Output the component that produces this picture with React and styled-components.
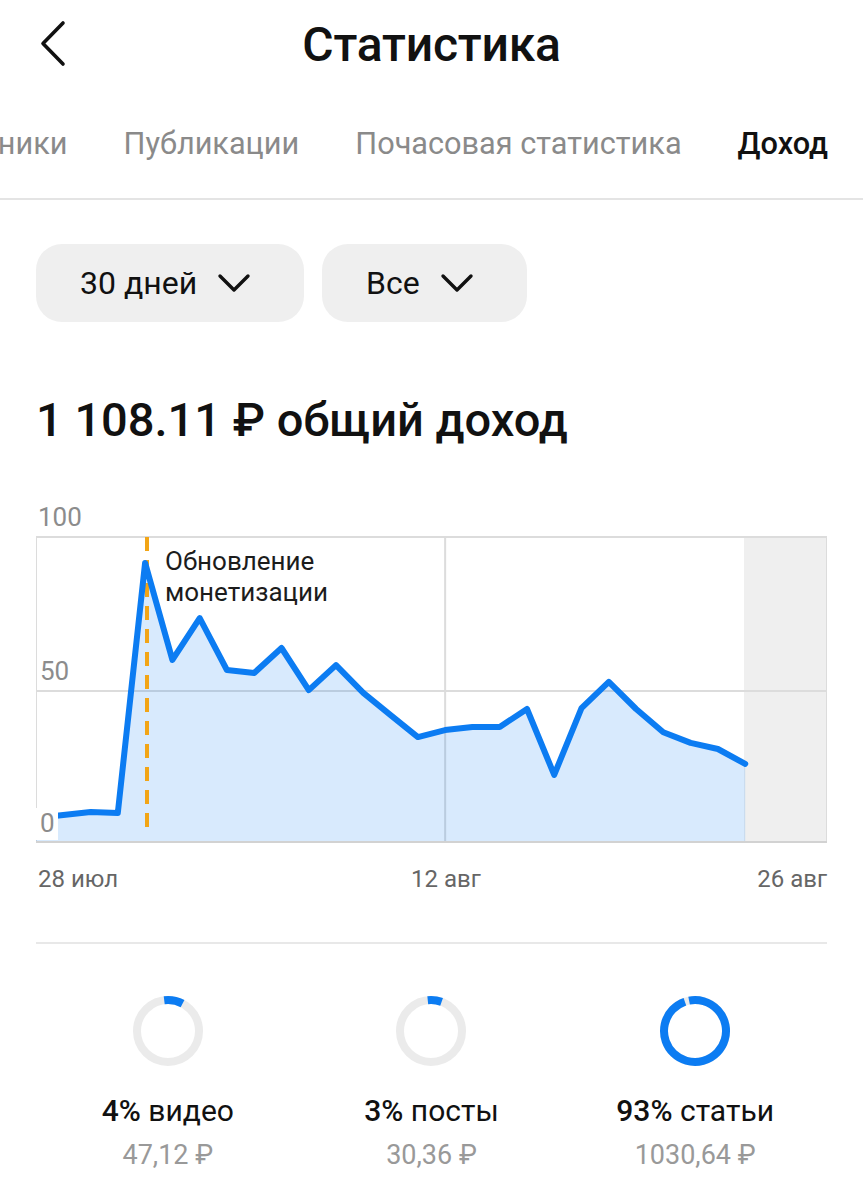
import React from "react";
import styled, { createGlobalStyle } from "styled-components";

const GlobalStyle = createGlobalStyle`
  body {
    margin: 0;
    background: #fff;
    font-family: Roboto, "Noto Sans", sans-serif;
    color: #111;
  }
`;

const TABS = ["Источники", "Публикации", "Почасовая статистика", "Доход"];
const ACTIVE_TAB = "Доход";

// revenue per day, 28 jul .. 23 aug
const REVENUE = [
  7.9, 8.9, 9.8, 9.5, 91.5, 59.7, 73.4, 56.4, 55.4, 63.6, 49.8, 58, 48.9, 41.6,
  34.4, 36.7, 37.7, 37.7, 43.6, 22, 43.9, 52.5, 43.6, 36, 32.5, 30.5, 25.6,
];

const SHARES = [
  { pct: "4%", label: "видео", amount: "47,12 ₽", from: -7, to: 28 },
  { pct: "3%", label: "посты", amount: "30,36 ₽", from: -6, to: 20 },
  { pct: "93%", label: "статьи", amount: "1030,64 ₽", from: -11, to: 341 },
];

// chart geometry in page coords
const LEFT = 36;
const RIGHT = 827;
const TOP = 537;
const BOTTOM = 842;
const MID = 691;
const STEP = (RIGHT - LEFT) / 29;

const px = (i) => LEFT + i * STEP;
const py = (v) => BOTTOM - (v / 100) * (BOTTOM - TOP);

export default function App() {
  const points = REVENUE.map((v, i) => `${px(i).toFixed(1)},${py(v).toFixed(1)}`).join(" ");
  const lastX = px(REVENUE.length - 1);
  const area = `${LEFT},${BOTTOM} ${points} ${lastX.toFixed(1)},${BOTTOM}`;

  return (
    <Page>
      <GlobalStyle />
      <Header>
        <BackButton aria-label="Назад">
          <svg width="30" height="48" viewBox="0 0 30 48">
            <path d="M25 3 L5 23.5 L25 44" fill="none" stroke="#111" strokeWidth="3.6" strokeLinecap="round" strokeLinejoin="round" />
          </svg>
        </BackButton>
        <Title>Статистика</Title>
        <span />
      </Header>

      <TabBar>
        {TABS.map((t) => (
          <Tab key={t} $active={t === ACTIVE_TAB}>{t}</Tab>
        ))}
      </TabBar>

      <Content>
        <Filters>
          <FilterButton>
            30 дней <Chevron />
          </FilterButton>
          <FilterButton>
            Все <Chevron />
          </FilterButton>
        </Filters>

        <Total>1 108.11 ₽ общий доход</Total>

        <ChartBox>
          <svg width="791" height="346" viewBox="36 500 791 346">
            <rect x={744} y={TOP} width={RIGHT - 744} height={BOTTOM - TOP} fill="#efefef" />
            <g stroke="#dcdcdc" strokeWidth="2">
              <line x1={LEFT} y1={TOP} x2={RIGHT} y2={TOP} />
              <line x1={LEFT} y1={MID} x2={RIGHT} y2={MID} />
              <line x1={LEFT} y1={TOP} x2={LEFT} y2={BOTTOM} />
              <line x1={RIGHT} y1={TOP} x2={RIGHT} y2={BOTTOM} />
              <line x1={px(15)} y1={TOP} x2={px(15)} y2={BOTTOM} />
            </g>
            <polygon points={area} fill="rgba(12,124,245,0.16)" />
            <line x1={LEFT} y1={BOTTOM} x2={RIGHT} y2={BOTTOM} stroke="#d2d2d2" strokeWidth="2" />
            <line x1="147" y1={TOP} x2="147" y2="832" stroke="#f2a516" strokeWidth="4" strokeDasharray="14 9" />
            <polyline points={points} fill="none" stroke="#0c7cf2" strokeWidth="6" strokeLinejoin="round" strokeLinecap="round" />

            <rect x="35" y="808" width="23" height="32" fill="#fff" />
            <g fontFamily="Roboto, sans-serif" fontSize="26" fill="#8c8c8c">
              <text x="38" y="526">100</text>
              <text x="40" y="680">50</text>
              <text x="40" y="832">0</text>
            </g>
            <g fontFamily="Roboto, sans-serif" fontSize="26" fill="#1c1c1c">
              <text x="165" y="570">Обновление</text>
              <text x="165" y="601">монетизации</text>
            </g>
          </svg>
        </ChartBox>

        <AxisLabels>
          <span>28 июл</span>
          <span>12 авг</span>
          <span>26 авг</span>
        </AxisLabels>

        <Divider />

        <Shares>
          {SHARES.map((s) => (
            <Share key={s.label}>
              <Donut from={s.from} to={s.to} />
              <ShareLabel>
                <b>{s.pct}</b> {s.label}
              </ShareLabel>
              <ShareAmount>{s.amount}</ShareAmount>
            </Share>
          ))}
        </Shares>
      </Content>
    </Page>
  );
}

function Chevron() {
  return (
    <svg width="34" height="20" viewBox="0 0 34 20">
      <path d="M3 3 L17 17 L31 3" fill="none" stroke="#111" strokeWidth="3.4" strokeLinecap="round" strokeLinejoin="round" />
    </svg>
  );
}

function Donut({ from, to }) {
  const r = 31;
  const c = 40;
  const pt = (deg) => {
    const a = ((deg - 90) * Math.PI) / 180;
    return `${(c + r * Math.cos(a)).toFixed(2)} ${(c + r * Math.sin(a)).toFixed(2)}`;
  };
  const large = to - from > 180 ? 1 : 0;
  return (
    <svg width="80" height="80" viewBox="0 0 80 80">
      <circle cx={c} cy={c} r={r} fill="none" stroke="#ebebeb" strokeWidth="8" />
      <path d={`M ${pt(from)} A ${r} ${r} 0 ${large} 1 ${pt(to)}`} fill="none" stroke="#0c7cf2" strokeWidth="8" />
    </svg>
  );
}

const Page = styled.div`
  width: 863px;
  min-height: 1200px;
  background: #fff;
`;

const Header = styled.header`
  height: 88px;
  display: grid;
  grid-template-columns: 1fr auto 1fr;
  align-items: center;
  padding: 0 36px;
`;

const BackButton = styled.button`
  border: 0;
  background: none;
  padding: 0;
  width: 30px;
  height: 48px;
  cursor: pointer;
  justify-self: start;
  margin-left: 2px;
`;

const Title = styled.h1`
  margin: 0;
  font-size: 48px;
  font-weight: 500;
  color: #111;
  letter-spacing: -0.2px;
`;

const TabBar = styled.nav`
  height: 110px;
  display: flex;
  justify-content: flex-end;
  align-items: center;
  gap: 56px;
  padding-right: 35px;
  overflow: hidden;
  border-bottom: 2px solid #e4e4e4;
`;

const Tab = styled.div`
  flex-shrink: 0;
  white-space: nowrap;
  font-size: 30.7px;
  font-weight: ${(p) => (p.$active ? 500 : 400)};
  color: ${(p) => (p.$active ? "#111" : "#8a8a8a")};
`;

const Content = styled.main`
  padding: 0 36px;
`;

const Filters = styled.div`
  display: flex;
  gap: 18px;
  margin-top: 44px;
`;

const FilterButton = styled.button`
  height: 78px;
  display: flex;
  align-items: center;
  gap: 20px;
  padding: 0 53px 0 44px;
  border: 0;
  border-radius: 26px;
  background: #efefef;
  font-family: Roboto, sans-serif;
  font-size: 32px;
  font-weight: 400;
  color: #111;
`;

const Total = styled.h2`
  margin: 70px 0 0;
  font-size: 47px;
  line-height: 1.2;
  font-weight: 500;
  color: #111;
`;

const ChartBox = styled.div`
  margin-top: 52px;
  height: 346px;

  svg {
    display: block;
  }
`;

const AxisLabels = styled.div`
  margin-top: 18px;
  display: grid;
  grid-template-columns: 375px auto 1fr;
  font-size: 24px;
  line-height: 30px;
  color: #666;

  span:first-child {
    padding-left: 2px;
  }

  span:last-child {
    justify-self: end;
  }
`;

const Divider = styled.hr`
  margin: 48px 0 0;
  border: 0;
  height: 2px;
  background: #e8e8e8;
`;

const Shares = styled.div`
  display: grid;
  grid-template-columns: repeat(3, 1fr);
  margin-top: 47px;
`;

const Share = styled.div`
  display: flex;
  flex-direction: column;
  align-items: center;

  svg {
    display: block;
  }
`;

const ShareLabel = styled.div`
  margin-top: 22px;
  font-size: 30px;
  line-height: 36px;
  color: #111;

  b {
    font-weight: 500;
  }
`;

const ShareAmount = styled.div`
  margin-top: 10px;
  font-size: 27px;
  line-height: 32px;
  color: #999;
`;
